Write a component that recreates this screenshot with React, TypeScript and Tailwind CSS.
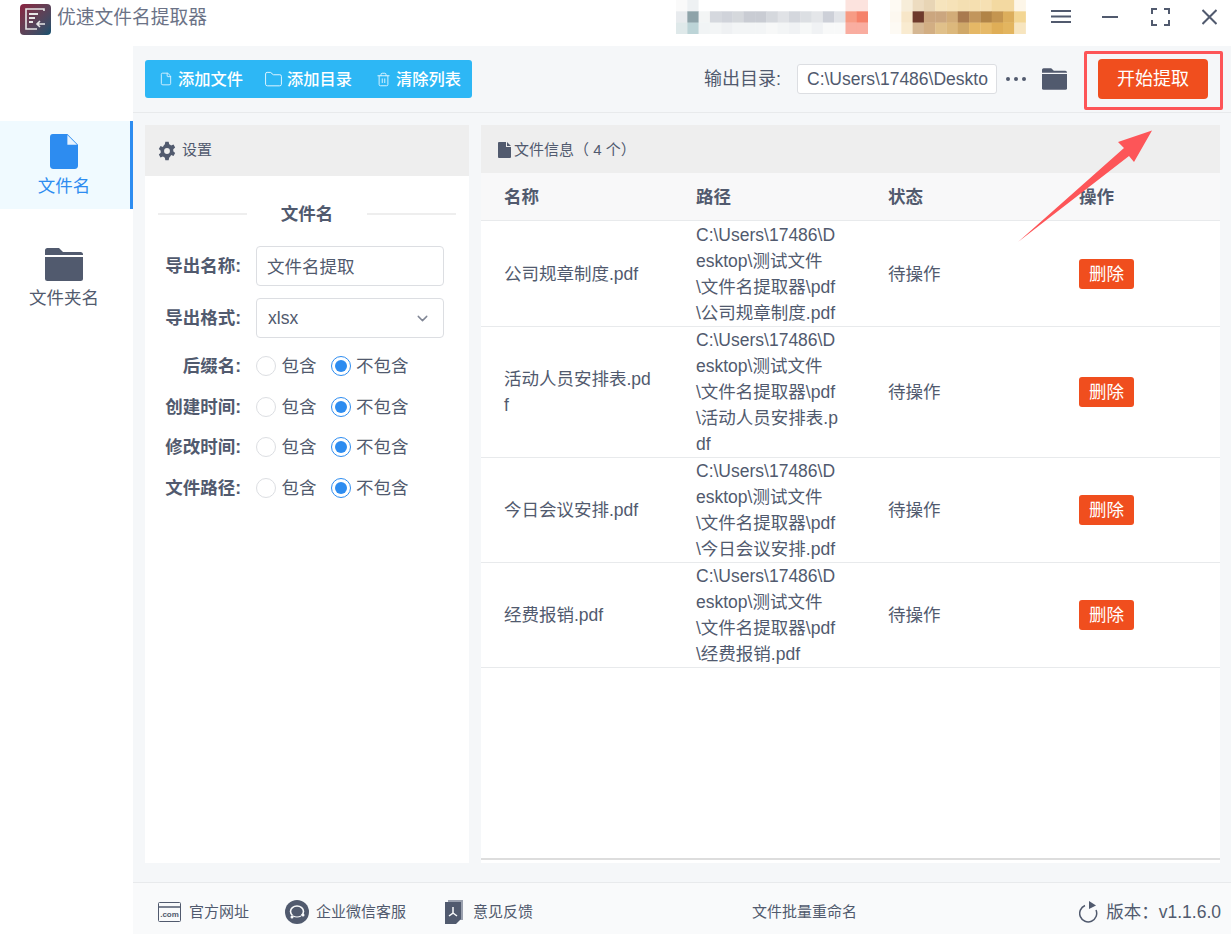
import { ChevronDown, File, Folder, Trash2 } from "lucide-react";

const FONT = "font-['Liberation_Sans','Noto_Sans_CJK_SC',sans-serif]";

const rows = [
  {
    name: ["公司规章制度.pdf"],
    path: ["C:\\Users\\17486\\D", "esktop\\测试文件", "\\文件名提取器\\pdf", "\\公司规章制度.pdf"],
  },
  {
    name: ["活动人员安排表.pd", "f"],
    path: ["C:\\Users\\17486\\D", "esktop\\测试文件", "\\文件名提取器\\pdf", "\\活动人员安排表.p", "df"],
  },
  {
    name: ["今日会议安排.pdf"],
    path: ["C:\\Users\\17486\\D", "esktop\\测试文件", "\\文件名提取器\\pdf", "\\今日会议安排.pdf"],
  },
  {
    name: ["经费报销.pdf"],
    path: ["C:\\Users\\17486\\D", "esktop\\测试文件", "\\文件名提取器\\pdf", "\\经费报销.pdf"],
  },
];

const mosaicA = [
  ["#fafafa", "#eef1f3", "#fff", "#fff", "#fff", "#fff", "#fff", "#fff", "#fff", "#fff", "#fff", "#fff", "#fff", "#fff", "#fff", "#fce3de", "#fce3de"],
  ["#e8ebee", "#8ea3a9", "#f3f5f5", "#d5d8de", "#d0d3da", "#d5d8dc", "#c9ccd3", "#c9ccd3", "#d5d8dd", "#e0e2e6", "#d4d7dd", "#dcdfe3", "#e4e6e9", "#cdd0d8", "#e2e4e8", "#f79b84", "#f5826a"],
  ["#dfe9ea", "#bcd4d7", "#f1f4f5", "#f3f5f6", "#eff1f3", "#f3f5f6", "#f3f5f6", "#f3f5f6", "#f7f8f8", "#f3f5f6", "#f0f2f4", "#f6f8f8", "#f0f2f4", "#f8f9f9", "#f8f9f9", "#f9ada0", "#f9ada0"],
];

const mosaicB = [
  ["#fefaf3", "#f7edd9", "#eddcc0", "#e8d5b5", "#f6e4bd", "#f6e2b8", "#f4dfb2", "#f5dfb0", "#f6e0b3", "#f3d9a1", "#f3d9a1", "#fdf6e8"],
  ["#fdf8f0", "#f7e6c8", "#6e3a2c", "#cba67f", "#cba67f", "#d2ac78", "#a97a4f", "#c2965c", "#b18447", "#c49550", "#dcae5c", "#f3d693"],
  ["#fdfaf4", "#f9ebd0", "#d5b793", "#d2ae83", "#e0c08a", "#dcb87c", "#d0a868", "#e5b866", "#e6b968", "#dfae57", "#e3b55f", "#f7e5bf"],
];

function Mosaic({ cells, className }: { cells: string[][]; className: string }) {
  const size = 11.3;
  const w = cells[0].length * size;
  const h = cells.length * size;
  return (
    <svg className={className} viewBox={`0 0 ${w} ${h}`} width={w} height={h}>
      {cells.map((row, y) =>
        row.map((c, x) => <rect key={`${x}-${y}`} x={x * size} y={y * size} width={size + 0.3} height={size + 0.3} fill={c} />)
      )}
    </svg>
  );
}

function SideFileIcon() {
  return (
    <svg width="28" height="35" viewBox="0 0 29 36">
      <path d="M3 0H18L29 11V32.500A3.500 3.500 0 0 1 25.500 36H3.500A3.500 3.500 0 0 1 0 32.500V3A3 3 0 0 1 3 0Z" fill="#2d8cf0" />
      <path d="M18 1V11H28Z" fill="#e8f3fe" />
    </svg>
  );
}

function FolderSolid({ width, height }: { width: number; height: number }) {
  return (
    <svg width={width} height={height} viewBox="0 0 38 33">
      <path d="M2.500 0H14L18 4H35.500A2.500 2.500 0 0 1 38 6.500V7H0V2.500A2.500 2.500 0 0 1 2.500 0Z" fill="#515a6e" />
      <path d="M0 9H38V30.500A2.500 2.500 0 0 1 35.500 33H2.500A2.500 2.500 0 0 1 0 30.500Z" fill="#515a6e" />
    </svg>
  );
}

function GearIcon() {
  return (
    <svg width="20" height="20" viewBox="0 0 24 24" fill="#515a6e">
      <path
        fillRule="evenodd"
        d="M14 1l.6 3a8.500 8.500 0 0 1 2.300 1.300l2.900-1 2 3.500-2.300 2a8.500 8.500 0 0 1 0 2.600l2.300 2-2 3.500-2.900-1A8.500 8.500 0 0 1 14.600 20l-.6 3h-4l-.6-3a8.500 8.500 0 0 1-2.300-1.300l-2.900 1-2-3.500 2.300-2a8.500 8.500 0 0 1 0-2.600l-2.300-2 2-3.500 2.900 1A8.500 8.500 0 0 1 9.400 4L10 1zM12 8.500a3.500 3.500 0 1 0 0 7 3.500 3.500 0 0 0 0-7z"
      />
    </svg>
  );
}

function Radio({ checked, label }: { checked?: boolean; label: string }) {
  return (
    <label className="flex items-center gap-[5.500px] text-[17.500px] text-[#515a6e]">
      {checked ? (
        <span className="flex h-5 w-5 items-center justify-center rounded-full border border-[#2d8cf0] bg-white">
          <span className="h-3 w-3 rounded-full bg-[#2d8cf0]" />
        </span>
      ) : (
        <span className="h-5 w-5 rounded-full border border-[#dcdee2] bg-white" />
      )}
      {label}
    </label>
  );
}

function FieldLabel({ text }: { text: string }) {
  return <span className="w-[83px] shrink-0 whitespace-nowrap text-right text-[17.500px] font-bold text-[#515a6e]">{text}</span>;
}

function RadioRow({ label }: { label: string }) {
  return (
    <div className="flex h-[40.500px] items-center">
      <FieldLabel text={label} />
      <div className="ml-[15px] flex gap-[14px]">
        <Radio label="包含" />
        <Radio checked label="不包含" />
      </div>
    </div>
  );
}

export default function App() {
  return (
    <div className={`flex h-[934px] w-[1231px] flex-col overflow-hidden bg-white ${FONT} relative`}>
      {/* title bar */}
      <div className="relative flex h-[46px] shrink-0 items-start bg-white">
        <div className="ml-5 mt-1 flex h-[31px] w-[31px] items-center justify-center rounded-[4px] bg-gradient-to-br from-[#8a1f3f] to-[#07506e]">
          <svg width="23" height="23" viewBox="0 0 23 23" fill="none" stroke="#e6e6e6" strokeWidth="1.600">
            <path d="M20 3V1H2V21H13" />
            <path d="M5 6H14M5 10H11M5 14H9" strokeWidth="2" />
            <path d="M21 16H13M16 13L13 16L16 19" />
          </svg>
        </div>
        <span className="ml-[6px] mt-[6px] text-[18.750px] leading-6 text-[#6b7286]">优速文件名提取器</span>
        <Mosaic cells={mosaicA} className="absolute left-[676px] top-0" />
        <Mosaic cells={mosaicB} className="absolute left-[890px] top-0" />
        <div className="ml-auto mr-[14px] mt-[8px] flex items-center text-[#515a6e]">
          <svg width="20" height="18" viewBox="0 0 20 18" stroke="currentColor" strokeWidth="2">
            <path d="M0 3H20M0 8.500H20M0 14H20" />
          </svg>
          <svg className="ml-[31px]" width="16" height="18" viewBox="0 0 16 18" stroke="currentColor" strokeWidth="2">
            <path d="M0 9H16" />
          </svg>
          <svg className="ml-[33px]" width="19" height="18" viewBox="0 0 19 18" fill="none" stroke="currentColor" strokeWidth="2">
            <path d="M1 6V1H6M13 1H18V6M18 12V17H13M6 17H1V12" />
          </svg>
          <svg className="ml-[32px]" width="15" height="16" viewBox="0 0 15 16" stroke="currentColor" strokeWidth="2">
            <path d="M0.500 1L14.500 15M14.500 1L0.500 15" />
          </svg>
        </div>
      </div>

      <div className="flex min-h-0 flex-1">
        {/* sidebar */}
        <aside className="w-[133px] shrink-0 bg-white pt-[75px]">
          <div className="flex h-[88px] flex-col items-center border-r-[3px] border-[#2d8cf0] bg-[#f0faff] pr-[2px] pt-[13px] text-[#2d8cf0]">
            <SideFileIcon />
            <span className="mt-[3px] text-[17.500px] leading-7">文件名</span>
          </div>
          <div className="flex flex-col items-center pr-[5px] pt-[39px] text-[#515a6e]">
            <FolderSolid width={38} height={33} />
            <span className="mt-[3px] text-[17.500px] leading-7">文件夹名</span>
          </div>
        </aside>

        <main className="flex min-w-0 flex-1 flex-col bg-[#f5f7f9]">
          {/* toolbar */}
          <div className="flex h-[67px] shrink-0 items-center border-b border-[#e8eaec] pl-3">
            <div className="flex h-[38px] w-[327px] items-center rounded-[3px] bg-[#2db7f5] pl-[14px] text-[16.250px] font-medium text-white">
              <File size={14} strokeWidth={1.500} className="text-[#e0f5ff]" />
              <span className="ml-[5px]">添加文件</span>
              <Folder size={19} strokeWidth={1.250} className="ml-[21px] text-[#e0f5ff]" />
              <span className="ml-[4px]">添加目录</span>
              <Trash2 size={15} strokeWidth={1.500} className="ml-[24px] text-[#e0f5ff]" />
              <span className="ml-[5px]">清除列表</span>
            </div>
            <span className="ml-[232px] w-[93px] shrink-0 text-[18px] text-[#515a6e]">输出目录:</span>
            <div className="flex h-[30px] w-[200px] shrink-0 items-center overflow-hidden whitespace-nowrap rounded-[3px] border border-[#dcdee2] bg-white pl-[9px] text-[17.500px] text-[#515a6e]">
              C:\Users\17486\Deskto
            </div>
            <div className="ml-[9px] flex w-[20px] justify-between">
              <span className="h-[4px] w-[4px] rounded-full bg-[#515a6e]" />
              <span className="h-[4px] w-[4px] rounded-full bg-[#515a6e]" />
              <span className="h-[4px] w-[4px] rounded-full bg-[#515a6e]" />
            </div>
            <div className="ml-[16px]">
              <FolderSolid width={25} height={22} />
            </div>
            <button className="ml-[31px] h-10 w-[110px] rounded-[4px] bg-[#f04e1e] text-[18px] text-white">开始提取</button>
          </div>

          <div className="flex min-h-0 flex-1 gap-3 pb-[19px] pl-3 pr-[11px] pt-3">
            {/* settings */}
            <section className="flex w-[324px] shrink-0 flex-col bg-white">
              <div className="flex h-[51px] items-center gap-[5px] bg-[#eeeeee] pl-[12px] text-[15px] text-[#515a6e]">
                <GearIcon />
                设置
              </div>
              <div className="px-[13px]">
                <div className="mt-[24px] flex h-[28px] items-center">
                  <span className="h-[2px] w-[89px] bg-[#eeeeee]" />
                  <span className="flex-1 text-center text-[17.500px] font-bold text-[#515a6e]">文件名</span>
                  <span className="h-[2px] w-[89px] bg-[#eeeeee]" />
                </div>
                <div className="mt-[18px] flex items-center">
                  <FieldLabel text="导出名称:" />
                  <div className="ml-[15px] flex h-10 w-[188px] items-center rounded-[4px] border border-[#dcdee2] pl-[10px] pt-[2px] text-[17.500px] text-[#515a6e]">
                    文件名提取
                  </div>
                </div>
                <div className="mt-[12px] flex items-center">
                  <FieldLabel text="导出格式:" />
                  <div className="ml-[15px] flex h-10 w-[188px] items-center justify-between rounded-[4px] border border-[#dcdee2] pl-[11px] pr-[12px] text-[17.500px] text-[#515a6e]">
                    xlsx
                    <ChevronDown size={17} className="text-[#808695]" />
                  </div>
                </div>
                <div className="mt-[8px]">
                  <RadioRow label="后缀名:" />
                  <RadioRow label="创建时间:" />
                  <RadioRow label="修改时间:" />
                  <RadioRow label="文件路径:" />
                </div>
              </div>
            </section>

            {/* file list */}
            <section className="flex min-w-0 flex-1 flex-col bg-white">
              <div className="flex h-[48px] shrink-0 items-center gap-[3px] bg-[#eeeeee] pl-[17px] pt-[2px] text-[15px] text-[#515a6e]">
                <svg width="13" height="16" viewBox="0 0 13 16" fill="#515a6e">
                  <path d="M1 0H8V5H13V15A1 1 0 0 1 12 16H1A1 1 0 0 1 0 15V1A1 1 0 0 1 1 0ZM9 0L13 4H9Z" />
                </svg>
                文件信息（ 4 个）
              </div>
              <div className="grid h-[48px] shrink-0 grid-cols-[192px_192px_191px_1fr] items-center border-b border-[#e8eaec] bg-[#f8f8f9] pl-[23px] pt-[2px] text-[17.500px] font-bold text-[#515a6e]">
                <span>名称</span>
                <span>路径</span>
                <span>状态</span>
                <span>操作</span>
              </div>
              <div className="mb-[3px] min-h-0 flex-1 border-b-2 border-[#dddddd] pt-px">
                {rows.map((r) => (
                  <div
                    key={r.name[0]}
                    className="grid grid-cols-[192px_192px_191px_1fr] items-center border-b border-[#e8eaec] pl-[23px] text-[17.500px] leading-[26px] text-[#515a6e]"
                  >
                    <div className="whitespace-nowrap">
                      {r.name.map((l) => (
                        <div key={l}>{l}</div>
                      ))}
                    </div>
                    <div className="whitespace-nowrap">
                      {r.path.map((l) => (
                        <div key={l}>{l}</div>
                      ))}
                    </div>
                    <div>待操作</div>
                    <div>
                      <button className="h-[30px] w-[55px] rounded-[3px] bg-[#f04e1e] text-[17.500px] text-white">删除</button>
                    </div>
                  </div>
                ))}
              </div>
            </section>
          </div>

          {/* footer */}
          <footer className="flex h-[52px] shrink-0 items-center border-t border-[#e8eaec] bg-[#f9fafb] pl-[25px] pr-[10px] pt-[7px] text-[15px] text-[#515a6e]">
            <svg width="23" height="20" viewBox="0 0 23 20" fill="none" stroke="#515a6e">
              <rect x="0.500" y="0.500" width="22" height="19" rx="1" />
              <path d="M1 5H22" strokeWidth="1.500" />
              <text x="11.500" y="15" fontSize="8" fontWeight="bold" fill="#515a6e" stroke="none" textAnchor="middle">.com</text>
            </svg>
            <span className="ml-[8px]">官方网址</span>
            <svg className="ml-[36px]" width="24" height="24" viewBox="0 0 24 24">
              <circle cx="12" cy="12" r="12" fill="#515a6e" />
              <path d="M16.500 15.500A6.500 5.500 0 1 0 7.500 15.500" fill="none" stroke="#f9fafb" strokeWidth="1.600" />
              <path d="M8 16Q12 18 16 16" fill="none" stroke="#f9fafb" strokeWidth="1.200" />
              <circle cx="7" cy="17" r="1.500" fill="#f9fafb" />
              <circle cx="18" cy="15" r="1.500" fill="#f9fafb" />
            </svg>
            <span className="ml-[7px]">企业微信客服</span>
            <svg className="ml-[39px]" width="18" height="24" viewBox="0 0 18 24">
              <path d="M3 0H18V20H15V3H3Z" fill="#9aa0ae" />
              <path d="M0 2H16V19L11 24H0Z" fill="#515a6e" />
              <path d="M8 7V13L4 16M8 13L12 16" fill="none" stroke="#f9fafb" strokeWidth="1.500" />
            </svg>
            <span className="ml-[10px]">意见反馈</span>
            <span className="ml-[219px]">文件批量重命名</span>
            <svg className="ml-auto" width="20" height="22" viewBox="0 0 20 22" fill="none" stroke="#515a6e" strokeWidth="1.500">
              <path d="M6 4.500A8.500 8.500 0 1 0 17 9" />
              <path d="M10 0L17 4.500L10 8Z" fill="#515a6e" stroke="none" />
            </svg>
            <span className="ml-[7px] text-[17.500px]">版本：v1.1.6.0</span>
          </footer>
        </main>
      </div>

      {/* annotation over the screenshot */}
      <div className="pointer-events-none absolute left-[1084px] top-[51px] h-[59px] w-[139px] rounded-[2px] border-[3px] border-[#fd5558]" />
      <svg className="pointer-events-none absolute left-[1010px] top-[125px]" width="150" height="125" viewBox="1010 125 150 125">
        <path d="M1018 242L1124 148L1118 142L1152 130.500L1134 162L1129 156Z" fill="#fd5558" />
      </svg>
    </div>
  );
}
